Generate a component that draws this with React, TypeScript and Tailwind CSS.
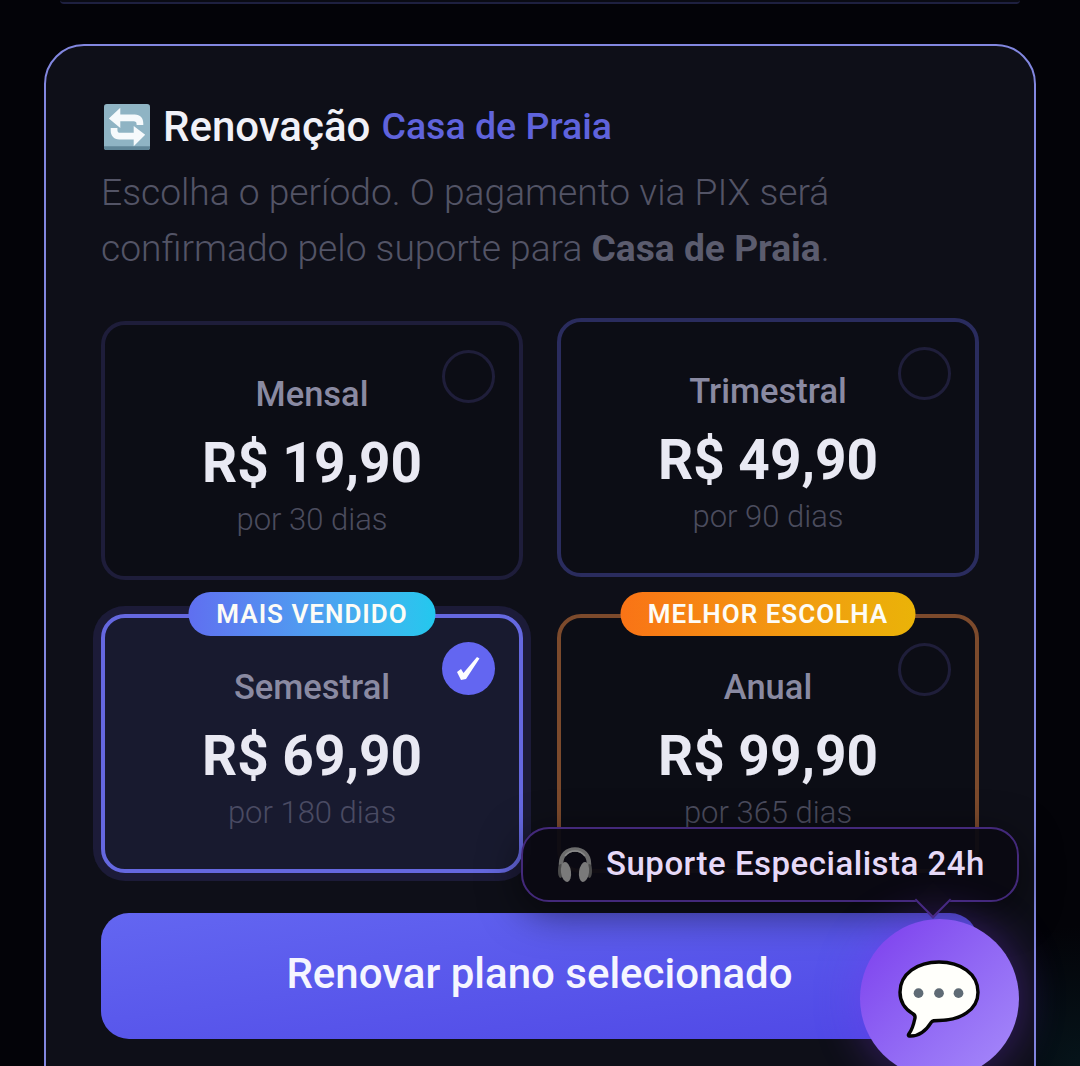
import type { ReactNode } from "react";

type Plan = {
  name: string;
  price: string;
  days: string;
  shell: string;
  sub: string;
  selected?: boolean;
  badge?: { text: string; className: string };
};

const plans: Plan[] = [
  {
    name: "Mensal",
    price: "R$ 19,90",
    days: "por 30 dias",
    shell: "border-[#1e1d3a] bg-[#0c0d15]",
    sub: "text-[#4b4c5e]",
  },
  {
    name: "Trimestral",
    price: "R$ 49,90",
    days: "por 90 dias",
    shell: "-translate-y-[3px] border-[#2a2c5e] bg-[#0c0d15]",
    sub: "text-[#4b4c5e]",
  },
  {
    name: "Semestral",
    price: "R$ 69,90",
    days: "por 180 dias",
    shell: "border-[#6568e0] bg-[#181a2f] shadow-[0_0_0_8px_#1c1b38]",
    sub: "text-[#4a4b63]",
    selected: true,
    badge: {
      text: "MAIS VENDIDO",
      className: "w-[247px] bg-gradient-to-r from-[#5f6ff0] to-[#22c8ee]",
    },
  },
  {
    name: "Anual",
    price: "R$ 99,90",
    days: "por 365 dias",
    shell: "border-[#7c4a2c] bg-[#0c0d15]",
    sub: "text-[#4b4c5e]",
    badge: {
      text: "MELHOR ESCOLHA",
      className: "w-[295px] bg-gradient-to-r from-[#f97316] to-[#eab308]",
    },
  },
];

function RepeatEmoji() {
  return (
    <svg viewBox="0 0 48 48" className="ml-[3px] h-[46px] w-[46px] shrink-0">
      <rect width="48" height="48" rx="3" fill="#8fb4c4" />
      <path d="M0 44h48v1a3 3 0 0 1-3 3H3a3 3 0 0 1-3-3z" fill="#5f8597" />
      <path d="M5 15 17 4v7h15c6 0 9 4 9 9v2h-7v-1c0-2-1-3-3-3H17v7z" fill="#f6fafc" />
      <path d="M43 32 31 44v-7H16c-6 0-9-4-9-9v-3h7v2c0 2 1 3 3 3h14v-7z" fill="#f6fafc" />
    </svg>
  );
}

function HeadphonesEmoji() {
  return (
    <svg viewBox="0 0 36 36" className="h-[36px] w-[36px] shrink-0">
      <path d="M4 24V17C4 8 10 2.500 18 2.500S32 8 32 17v7" fill="none" stroke="#6c6c6c" strokeWidth="4.500" />
      <path d="M8 9C11 5 14 4 18 4s7 1 10 5" fill="none" stroke="#8a8a8a" strokeWidth="1.500" />
      <ellipse cx="3.500" cy="24" rx="2.500" ry="7" fill="#4a4a4a" />
      <ellipse cx="32.500" cy="24" rx="2.500" ry="7" fill="#4a4a4a" />
      <ellipse cx="9" cy="25" rx="5" ry="10" fill="#7a7a7a" transform="rotate(-8 9 25)" />
      <ellipse cx="27" cy="25" rx="5" ry="10" fill="#7a7a7a" transform="rotate(8 27 25)" />
    </svg>
  );
}

function SpeechBubble() {
  return (
    <svg viewBox="0 0 84 80" className="mr-[2px] h-[78px] w-[82px]">
      <path
        d="M42 2C20 2 2 14 2 33c0 9 5 17 13 22 2 1 3 3 2 6-1 5-3 11-6 15-1 2 0 2 2 2 9 0 16-6 21-14 1-2 3-2 8-2 22 0 40-11 40-29C82 14 64 2 42 2z"
        fill="#fffffb"
        stroke="#050505"
        strokeWidth="3.500"
        strokeLinejoin="round"
      />
      <circle cx="21" cy="34" r="5" fill="#5f6b75" />
      <circle cx="42" cy="34" r="5" fill="#5f6b75" />
      <circle cx="62" cy="34" r="5" fill="#5f6b75" />
    </svg>
  );
}

function Radio({ selected }: { selected?: boolean }) {
  if (selected) {
    return (
      <span className="absolute right-[24px] top-[24px] h-[53px] w-[53px] rounded-full bg-[#6366f1]">
        <svg viewBox="0 0 53 53" className="h-[53px] w-[53px]">
          <path d="M15 30 19 27 21.500 31 35 15 37.500 16.500 24 37 19 38z" fill="#fdfdff" />
        </svg>
      </span>
    );
  }
  return (
    <span className="absolute right-[24px] top-[25px] h-[53px] w-[53px] rounded-full border-[3px] border-[#1f1e3a]" />
  );
}

function PlanCard({ plan }: { plan: Plan }) {
  return (
    <div className={`relative h-[259px] rounded-[24px] border-4 pt-[50px] text-center ${plan.shell}`}>
      {plan.badge ? (
        <span
          className={`absolute left-1/2 top-[-26px] h-[44px] -translate-x-1/2 rounded-full text-[26px] font-semibold leading-[44px] tracking-[1px] text-[#fdfcf6] ${plan.badge.className}`}
        >
          {plan.badge.text}
        </span>
      ) : null}
      <Radio selected={plan.selected} />
      <div className="text-[34.5px] font-medium leading-[38px] text-[#8a8aa2]">{plan.name}</div>
      <div className="mt-[18px] text-[55px] font-bold leading-[64px] text-[#e9e9f3]">{plan.price}</div>
      <div className={`mt-[7px] text-[31px] font-light leading-[36px] ${plan.sub}`}>{plan.days}</div>
    </div>
  );
}

function Frame({ children }: { children: ReactNode }) {
  return (
    <div className="relative h-[1066px] w-[1080px] overflow-hidden bg-[#030308] bg-[radial-gradient(circle_at_100%_100%,#06141a,transparent_140px)] font-[Roboto,sans-serif]">
      {children}
    </div>
  );
}

export default function App() {
  return (
    <Frame>
      <div className="mx-[60px] h-[4px] rounded-b-[24px] border-b-2 border-[#1e2040] bg-[#0a0b14]" />

      <section className="mx-[44px] mt-[40px] h-[1100px] rounded-[40px] border-2 border-[#8287e0] bg-[#0e0f18] px-[55px] pt-[55px]">
        <h2 className="flex h-[52px] items-center">
          <RepeatEmoji />
          <span className="ml-[13px] text-[42px] font-medium leading-none text-[#f1f1f8]">Renovação</span>
          <span className="ml-[11px] text-[37.500px] font-medium leading-none text-[#5f63dc]">Casa de Praia</span>
        </h2>
        <p className="mt-[11px] w-[800px] text-[37.2px] font-light leading-[56px] text-[#535466]">
          Escolha o período. O pagamento via PIX será confirmado pelo suporte para{" "}
          <strong className="font-bold text-[#5b5c6e]">Casa de Praia</strong>.
        </p>

        <div className="mt-[45px] grid grid-cols-2 gap-x-[34px] gap-y-[34px]">
          {plans.map((plan) => (
            <PlanCard key={plan.name} plan={plan} />
          ))}
        </div>

        <button className="mt-[40px] h-[126px] w-[877px] rounded-[28px] bg-gradient-to-br from-[#6366f1] to-[#4f46e5] pb-[6px] text-[42px] font-medium text-[#f5f5ff]">
          Renovar plano selecionado
        </button>
      </section>

      {/* floating support widget */}
      <div className="absolute left-[521px] top-[827px] flex h-[75px] w-[498px] items-center gap-[13px] rounded-[28px] border-2 border-[#43297a] bg-[#0b0a12]/95 pl-[34px] shadow-[0_10px_40px_rgba(0,0,0,0.55)]">
        <HeadphonesEmoji />
        <span className="pb-[3px] text-[33px] font-medium leading-none tracking-[0.5px] text-[#e6d9f8]">
          Suporte Especialista 24h
        </span>
        <span className="absolute left-[397px] top-[58px] h-[26px] w-[26px] rotate-45 border-b-2 border-r-2 border-[#43297a] bg-[#0b0a12]" />
      </div>
      <div className="absolute left-[860px] top-[919px] flex h-[159px] w-[159px] items-center justify-center rounded-full bg-gradient-to-br from-[#7c3aed] to-[#a78bfa] shadow-[0_0_45px_rgba(124,58,237,0.4)]">
        <SpeechBubble />
      </div>
    </Frame>
  );
}
